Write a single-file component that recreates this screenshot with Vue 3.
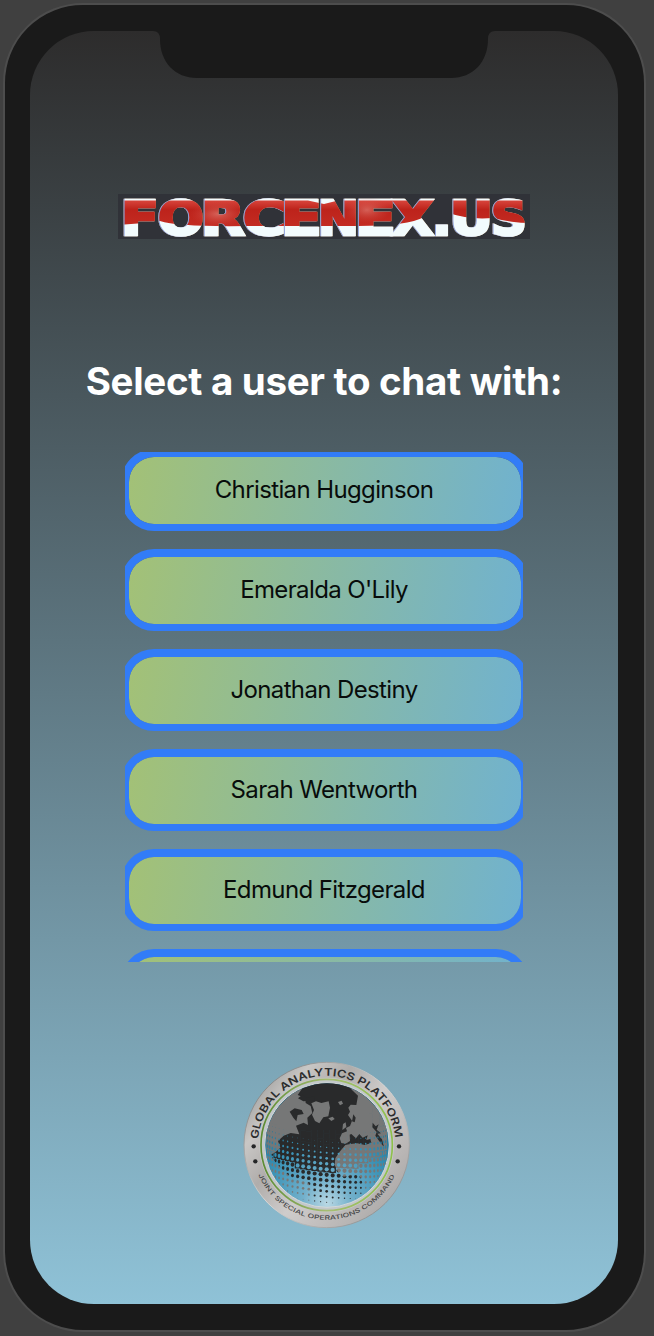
<script setup>
const users = [
  'Christian Hugginson',
  "Emeralda O'Lily",
  'Jonathan Destiny',
  'Sarah Wentworth',
  'Edmund Fitzgerald',
  '',
]

// Each letter of the wordmark: left edge and width of its advance box
const letters = [
  { c: 'F', x: 3, w: 38 },
  { c: 'O', x: 40, w: 46 },
  { c: 'R', x: 83, w: 44 },
  { c: 'C', x: 125, w: 43 },
  { c: 'E', x: 163, w: 41 },
  { c: 'N', x: 200, w: 41 },
  { c: 'E', x: 237, w: 41 },
  { c: 'X', x: 274, w: 42 },
  { c: '.', x: 314, w: 20 },
  { c: 'U', x: 332, w: 43 },
  { c: 'S', x: 373, w: 36 },
]

// Halftone on the lower half of the globe: cells thin out towards the rim
const cells = []
const R = 185
for (let r = 0; r < 22; r++) {
  for (let k = -13; k <= 13; k++) {
    const u = k * 0.098
    const x0 = R * Math.sin(u)
    const y0 = -125 + r * 16.5
    const sag = 26 * (1 - Math.cos(u))
    const x = 274 + x0
    const y = 270 + y0 + x0 * 0.1 - sag
    const w = 18 * Math.max(0.35, Math.cos(u))
    const depth = (y - 248 + Math.pow(x0 / R, 2) * 70) / 200
    const c = Math.max(0, Math.min(1, 1 - depth))
    cells.push({
      x, y, w,
      solid: c > 0.5,
      r: (c > 0.5 ? Math.sqrt((1 - c) * (1 - c) * 2 / 3.14) : Math.sqrt(c / 3.14)) * 16.5,
    })
  }
}
</script>

<template>
  <main class="stage">
    <div class="phone">
      <section class="screen">
        <svg class="notch" viewBox="0 0 342 47" width="342" height="47">
          <path d="M0 0Q7 0 7 8C7 31 22 47 44 47H298C320 47 335 31 335 8Q335 0 342 0Z" />
        </svg>

        <svg class="wordmark" viewBox="0 0 412 45" width="412" height="45">
          <defs>
            <linearGradient id="redTone" x1="0" y1="0" x2="0" y2="1">
              <stop offset="0" stop-color="#d8453c" />
              <stop offset=".35" stop-color="#bd231b" />
              <stop offset="1" stop-color="#c32b22" />
            </linearGradient>
            <radialGradient id="glow">
              <stop offset="0" stop-color="#e58a80" stop-opacity=".6" />
              <stop offset="1" stop-color="#d44d44" stop-opacity="0" />
            </radialGradient>
            <pattern id="enamel" patternUnits="userSpaceOnUse" width="412" height="50">
              <rect width="412" height="50" fill="#f2fbfd" />
              <path d="M0 6.5H190L206 10L220 6.5H412V29Q394 29 375 24Q350 26 331 19Q318 19 306 23Q290 32 240 32H130Q60 33 42 27L26 29L0 31Z" fill="url(#redTone)" />
              <ellipse cx="100" cy="20" rx="28" ry="13" fill="url(#glow)" />
              <ellipse cx="249" cy="16" rx="24" ry="13" fill="url(#glow)" />
            </pattern>
          </defs>
          <rect width="412" height="45" fill="#303238" />
          <g class="face">
            <text v-for="(l, i) in letters" :key="i" :x="l.x" y="41.2" :textLength="l.w" lengthAdjust="spacingAndGlyphs">{{ l.c }}</text>
          </g>
        </svg>

        <h1>Select a user to chat with:</h1>

        <div class="list">
          <button v-for="(u, i) in users" :key="i">{{ u }}</button>
        </div>

        <svg class="seal" viewBox="20 15 510 510" width="170" height="170">
          <defs>
            <linearGradient id="metal" x1="0" y1=".1" x2="1" y2=".9">
              <stop offset="0" stop-color="#8f8f8e" />
              <stop offset=".2" stop-color="#c9c7c5" />
              <stop offset=".36" stop-color="#b0adab" />
              <stop offset=".55" stop-color="#cfcccb" />
              <stop offset=".8" stop-color="#b9b6b5" />
              <stop offset="1" stop-color="#a4a1a0" />
            </linearGradient>
            <linearGradient id="edge" x1="0" y1="0" x2="1" y2="1">
              <stop offset="0" stop-color="#686a6a" />
              <stop offset=".5" stop-color="#d9d7d5" />
              <stop offset="1" stop-color="#777879" />
            </linearGradient>
            <linearGradient id="green" x1="0" y1="0" x2="1" y2="0">
              <stop offset="0" stop-color="#5b8b32" />
              <stop offset=".5" stop-color="#a6bd72" />
              <stop offset="1" stop-color="#8ec04b" />
            </linearGradient>
            <radialGradient id="sea" cx=".5" cy=".97" r=".9">
              <stop offset="0" stop-color="#b9d8e4" />
              <stop offset=".22" stop-color="#72b0cb" />
              <stop offset=".6" stop-color="#348fb4" />
              <stop offset="1" stop-color="#17617f" />
            </radialGradient>
            <clipPath id="disc"><circle cx="275" cy="270" r="185" /></clipPath>
            <mask id="halftone" maskUnits="userSpaceOnUse" x="80" y="75" width="390" height="390">
              <rect x="80" y="75" width="390" height="85" fill="#fff" />
              <rect x="150" y="75" width="250" height="150" fill="#fff" />
              <template v-for="(d, i) in cells" :key="'s' + i">
                <rect v-if="d.solid" :x="d.x - d.w / 2 - .8" :y="d.y - 9.2" :width="d.w + 1.6" height="18.4" fill="#fff" />
              </template>
              <ellipse
                v-for="(d, i) in cells" :key="'d' + i"
                :cx="d.x" :cy="d.y" :rx="d.r * d.w / 18" :ry="d.r" :fill="d.solid ? '#000' : '#fff'"
              />
            </mask>
            <path id="arcTop" d="M68.6 253A206 206 0 0 1 479.4 253" />
            <path id="arcBottom" d="M69 359A223 223 0 0 0 479 359" />
          </defs>
          <circle cx="274" cy="270" r="248" fill="url(#metal)" stroke="url(#edge)" stroke-width="3" />
          <circle cx="274" cy="270" r="202" fill="#c8c9c8" />
          <circle cx="274" cy="270" r="197" fill="#c3c8ca" stroke="url(#green)" stroke-width="5" />
          <circle cx="275" cy="270" r="187" fill="url(#sea)" stroke="#d3d9da" stroke-width="3" />
          <g clip-path="url(#disc)">
            <g mask="url(#halftone)">
              <rect x="80" y="75" width="390" height="390" fill="#767777" />
              <path
                fill="#292a2b"
                d="M187 120L203 97L245 76H325L350 105L368 122L363 150L346 149L339 158L344 170L338 180L350 197L344 213L332 219L335 229L320 235L313 250L318 264L331 266L344 258L343 239L348 237L362 250L372 237L382 248L397 241L393 255L405 252L408 264L388 270L366 265L345 267L330 270L313 290L300 310L298 330L308 351L325 365L348 361L368 356L382 378L388 460H238L222 424L232 400L210 375L176 376L148 350L120 322L105 300L120 292L135 278L128 258L145 242L166 234L192 238L182 212L205 203L218 210L216 188L231 174L226 153L211 144L210 129Z"
              />
              <path fill="#777878" d="M228 145L242 139L258 144L280 139L284 158L279 184L264 187L252 205L239 198L230 179L236 165Z" />
              <path fill="#777878" d="M279 190L292 185L298 192L288 198Z" />
              <path fill="#777878" d="M308 141L319 137L323 146L314 151Z" />
              <path fill="#777878" d="M323 207L331 202L333 216L321 225Z" />
              <path fill="#292a2b" d="M163 170L178 160L199 165L205 177L187 180L183 199L174 188Z" />
              <path fill="#292a2b" d="M188 130L201 119L213 129L239 124L236 137L204 139Z" />
              <path fill="#292a2b" d="M412 203L421 214L430 208L424 224L437 235L426 236L440 253L446 276L433 260L420 242L424 231L411 217Z" />
              <path fill="#292a2b" d="M354 178L361 188L358 202L350 199Z" />
            </g>
          </g>
          <text class="ring-text" font-size="32" font-weight="600">
            <textPath href="#arcTop" textLength="612" lengthAdjust="spacingAndGlyphs">GLOBAL ANALYTICS PLATFORM</textPath>
          </text>
          <text class="ring-text small" font-size="18" font-weight="500">
            <textPath href="#arcBottom" textLength="517" lengthAdjust="spacingAndGlyphs">JOINT SPECIAL OPERATIONS COMMAND</textPath>
          </text>
          <g fill="#252627">
            <circle cx="55" cy="274" r="6.5" /><circle cx="491" cy="274" r="6.5" />
            <circle cx="60" cy="319" r="6.5" /><circle cx="487" cy="319" r="6.5" />
          </g>
        </svg>
      </section>
    </div>
  </main>
</template>

<style>
body { background: #404040; overflow: hidden; }
</style>

<style scoped>
.stage {
  box-sizing: border-box;
  width: 654px;
  height: 1336px;
  padding: 3px;
  background: #404040;
  font-family: Inter, "Liberation Sans", sans-serif;
}
.phone {
  box-sizing: border-box;
  width: 643px;
  height: 1329px;
  padding: 26px 26px 26px 25px;
  border: 2px solid #4d4d4d;
  border-radius: 80px;
  background: #1a1a1a;
}
.screen {
  position: relative;
  display: flex;
  flex-direction: column;
  align-items: center;
  width: 588px;
  height: 1273px;
  border-radius: 64px;
  overflow: hidden;
  background: linear-gradient(#2d2c2c, #8fc2d7);
}
.notch {
  position: absolute;
  top: 0;
  left: 123px;
  fill: #1a1a1a;
}
.wordmark {
  flex: none;
  margin-top: 163px;
  overflow: visible;
}
.wordmark text {
  font: 700 48px "DejaVu Sans", sans-serif;
}
.face {
  fill: url(#enamel);
  stroke: url(#enamel);
  stroke-width: 2.6;
  filter: drop-shadow(-0.8px 0 0 #8b9fdc) drop-shadow(0.8px 0 0 #d0a56c);
}
h1 {
  margin: 118px 0 0;
  color: #fff;
  font-size: 38.5px;
  font-weight: 700;
  line-height: 48px;
  letter-spacing: -0.31px;
  white-space: nowrap;
}
.list {
  display: flex;
  flex-direction: column;
  align-items: center;
  gap: 18px;
  width: 398px;
  height: 510px;
  margin-top: 47px;
  overflow: hidden;
}
button {
  box-sizing: border-box;
  flex: none;
  width: 408px;
  height: 82px;
  margin-left: 2px;
  padding: 0 2px 3px 0;
  border: 8px solid #327cf7;
  border-bottom-width: 7px;
  border-radius: 33px;
  background: linear-gradient(100deg, #a3c176, #70b2cf) padding-box;
  color: #080c0b;
  font: 400 24px Inter, sans-serif;
  letter-spacing: -0.62px;
}
button:first-child { margin-top: -3px; }
.seal {
  flex: none;
  margin: 98px 0 0 5px;
}
.ring-text { fill: #2b2c2d; font-family: Inter, sans-serif; }
.small { fill: #444546; }
</style>
